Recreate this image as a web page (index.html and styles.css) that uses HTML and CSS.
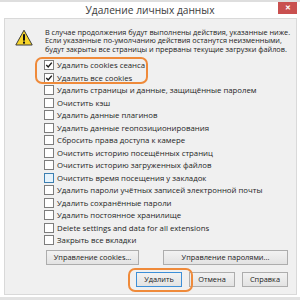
FILE: index.html
```html
<!DOCTYPE html>
<html lang="ru">
<head>
<meta charset="utf-8">
<title>Удаление личных данных</title>
<link rel="stylesheet" href="styles.css">
</head>
<body>
<div class="window">
  <div class="titlebar">
    <div></div>
    <div class="title">Удаление личных данных</div>
    <div class="close-wrap"><div class="close">&#x2715;</div></div>
  </div>
  <div class="panel">
    <div class="intro">
      <svg class="warn" width="18" height="17" viewBox="0 0 18 17">
        <path d="M9 1.2 L17.2 16 H0.8 Z" fill="#f7d52a" stroke="#3b3b3b" stroke-width="1" stroke-linejoin="round"/>
        <rect x="8" y="5.2" width="2" height="6.4" fill="#111"/>
        <rect x="8" y="12.6" width="2" height="2" fill="#111"/>
      </svg>
      <p class="msg">В случае продолжения будут выполнены действия, указанные ниже.<br>Если указанные по-умолчанию действия останутся неизменными,<br>будут закрыты все страницы и прерваны текущие загрузки файлов.</p>
    </div>
    <div class="list-wrap">
      <div class="ring ring-list"></div>
      <ul class="list">
        <li><span class="cb checked"><svg width="8" height="8" viewBox="0 0 8 8"><path d="M1.3 4.1 L3.2 6 L6.8 1.6" fill="none" stroke="#1a1a1a" stroke-width="1.4"/></svg></span>Удалить cookies сеанса</li>
        <li><span class="cb checked"><svg width="8" height="8" viewBox="0 0 8 8"><path d="M1.3 4.1 L3.2 6 L6.8 1.6" fill="none" stroke="#1a1a1a" stroke-width="1.4"/></svg></span>Удалить все cookies</li>
        <li><span class="cb"></span>Удалить страницы и данные, защищённые паролем</li>
        <li><span class="cb"></span>Очистить кэш</li>
        <li><span class="cb"></span>Удалить данные плагинов</li>
        <li><span class="cb"></span>Удалить данные геопозиционирования</li>
        <li><span class="cb"></span>Сбросить права доступа к камере</li>
        <li><span class="cb"></span>Очистить историю посещённых страниц</li>
        <li><span class="cb"></span>Очистить историю загруженных файлов</li>
        <li><span class="cb hover"></span>Очистить время посещения у закладок</li>
        <li><span class="cb"></span>Удалить пароли учётных записей электронной почты</li>
        <li><span class="cb"></span>Удалить сохранённые пароли</li>
        <li><span class="cb"></span>Удалить постоянное хранилище</li>
        <li><span class="cb"></span>Delete settings and data for all extensions</li>
        <li><span class="cb"></span>Закрыть все вкладки</li>
      </ul>
    </div>
    <div class="manage">
      <button class="btn btn-cookies">Управление cookies...</button>
      <button class="btn btn-passwords">Управление паролями...</button>
    </div>
    <div class="actions">
      <div class="default-wrap">
        <div class="ring ring-btn"></div>
        <button class="btn btn-action btn-default">Удалить</button>
      </div>
      <button class="btn btn-action">Отмена</button>
      <button class="btn btn-action">Справка</button>
    </div>
  </div>
</div>
</body>
</html>
```

FILE: styles.css
```css
* { box-sizing: border-box; }

html, body {
  margin: 0;
  padding: 0;
  width: 300px;
  height: 300px;
  overflow: hidden;
  background: #ffffff;
  font-family: "Open Sans", "Noto Sans", sans-serif;
  color: #1b1b1b;
}

.window {
  width: 300px;
  height: 300px;
  border-top: 2px solid #dedede;
  border-bottom: 3px solid #e2e2e2;
  background: #ffffff;
  display: flex;
  flex-direction: column;
}

.titlebar {
  height: 16px;
  display: grid;
  grid-template-columns: 1fr auto 1fr;
  align-items: start;
}

.title {
  font-size: 10.2px;
  line-height: 16px;
  color: #3c3c3c;
}

.close-wrap {
  display: flex;
  justify-content: flex-end;
  padding-right: 3px;
}

.close {
  width: 19px;
  height: 12px;
  background: #c9504f;
  color: #ffffff;
  font-size: 7px;
  line-height: 12px;
  text-align: center;
  font-weight: bold;
}

.panel {
  margin: 0 3px 0 4px;
  height: 277px;
  background: #f0f0f0;
  border: 1px solid #d9d9d9;
  display: flex;
  flex-direction: column;
}

.intro {
  display: flex;
  align-items: flex-start;
  margin-top: 8.75px;
  padding-left: 10px;
}

.warn {
  flex: none;
  margin-top: 1.5px;
  margin-right: 12px;
}

.msg {
  margin: 0;
  font-size: 7.3px;
  line-height: 8.5px;
  color: #222222;
  white-space: nowrap;
}

.list-wrap {
  position: relative;
  margin-top: 5.5px;
  margin-left: 39px;
}

.list {
  list-style: none;
  margin: 0;
  padding: 0;
}

.list li {
  height: 12.5px;
  display: flex;
  align-items: center;
  font-size: 7.8px;
  color: #1e1e1e;
  white-space: nowrap;
}

.cb {
  flex: none;
  width: 10px;
  height: 10px;
  border: 1px solid #7d7d7d;
  background: #ffffff;
  margin-right: 3px;
  display: flex;
  align-items: center;
  justify-content: center;
}

.cb.hover {
  border-color: #3c7fb1;
  background: #e6f3fc;
}

.ring {
  position: absolute;
  border: 2.5px solid #ef8a3a;
  border-radius: 7px;
  pointer-events: none;
}

.ring-list {
  left: -9px;
  top: -1.5px;
  width: 113px;
  height: 27px;
}

.manage {
  display: flex;
  margin-top: 3.25px;
  margin-left: 41px;
  gap: 24px;
}

.btn {
  font-family: "Open Sans", "Noto Sans", sans-serif;
  font-size: 7.4px;
  color: #1b1b1b;
  height: 15px;
  padding: 0;
  border: 1px solid #adadad;
  background: linear-gradient(#f2f2f2, #e3e3e3);
  border-radius: 0;
  line-height: 13px;
  text-align: center;
}

.btn-cookies { width: 93px; }
.btn-passwords { width: 125px; }

.actions {
  display: flex;
  margin-top: 7.5px;
  margin-left: 131px;
  gap: 7px;
}

.default-wrap {
  position: relative;
  display: flex;
}

.btn-action { width: 46px; }

.btn-default {
  border-color: #3c8fd8;
}

.ring-btn {
  left: -8px;
  top: -4px;
  width: 65px;
  height: 24px;
}
```
